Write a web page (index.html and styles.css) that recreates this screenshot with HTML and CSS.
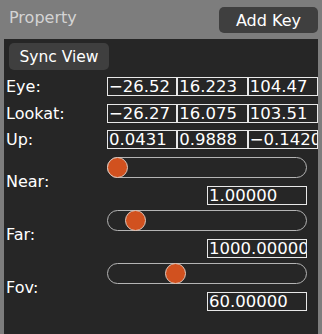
FILE: index.html
```html
<!DOCTYPE html>
<html lang="en">
<head>
    <meta charset="UTF-8">
    <title>Property</title>
    <link rel="stylesheet" href="styles.css">
</head>
<body>
    <div class="header">
        <div class="title">Property</div>
        <div class="btn add-key">Add Key</div>
    </div>

    <div class="panel">
        <div class="btn sync">Sync View</div>

        <div class="vec-rows">
            <div class="label">Eye:</div>
            <div class="vec">
                <div class="field">&minus;26.52</div>
                <div class="field">16.223</div>
                <div class="field">104.47</div>
            </div>

            <div class="label">Lookat:</div>
            <div class="vec">
                <div class="field">&minus;26.27</div>
                <div class="field">16.075</div>
                <div class="field">103.51</div>
            </div>

            <div class="label">Up:</div>
            <div class="vec">
                <div class="field">0.0431</div>
                <div class="field">0.9888</div>
                <div class="field">&minus;0.1420</div>
            </div>
        </div>

        <div class="sliders">
            <div class="label">Near:</div>
            <div class="slider-box">
                <div class="track"><div class="thumb" style="--pos: 0"></div></div>
                <div class="field value">1.00000</div>
            </div>

            <div class="label">Far:</div>
            <div class="slider-box">
                <div class="track"><div class="thumb" style="--pos: 0.1"></div></div>
                <div class="field value">1000.00000</div>
            </div>

            <div class="label">Fov:</div>
            <div class="slider-box">
                <div class="track"><div class="thumb" style="--pos: 0.328"></div></div>
                <div class="field value">60.00000</div>
            </div>
        </div>
    </div>
</body>
</html>
```

FILE: styles.css
```css
body {
    margin: 0;
    padding: 0;
    background: #7d7d7d;
    font-family: 'DejaVu Sans', Verdana, sans-serif;
    color: #fff;
    width: 322px;
    height: 334px;
    overflow: hidden;
    display: flex;
    flex-direction: column;
}

.header {
    height: 39px;
    display: flex;
    align-items: flex-start;
    justify-content: space-between;
    padding: 0 4px 0 9px;
    flex-shrink: 0;
}
.title {
    margin-top: 8px;
    font-size: 16px;
    color: #d4d4d4;
}

.btn {
    background: #3f3f3f;
    border-radius: 5px;
    font-size: 16px;
    color: #fff;
    display: flex;
    align-items: center;
    justify-content: center;
}
.add-key {
    margin-top: 7px;
    width: 99px;
    height: 26px;
}

.panel {
    flex: 1;
    margin: 0 4px;
    background: #262626;
    padding-top: 4px;
}
.sync {
    margin-left: 5px;
    width: 100px;
    height: 27px;
    font-size: 15.5px;
}

.label {
    padding-left: 2px;
    font-size: 16px;
    line-height: 19px;
}

.vec-rows {
    margin-top: 7px;
    display: grid;
    grid-template-columns: 103px 211px;
    grid-auto-rows: 19px;
    row-gap: 7.5px;
    align-items: center;
}
.vec {
    display: grid;
    grid-template-columns: repeat(3, 1fr);
    height: 19px;
}

.field {
    border: 1px solid #e8e8e8;
    height: 19px;
    box-sizing: border-box;
    font-size: 16.5px;
    line-height: 17px;
    padding-left: 1px;
    overflow: hidden;
    white-space: nowrap;
}

.sliders {
    margin-top: 8px;
    display: grid;
    grid-template-columns: 103px 211px;
    row-gap: 5px;
    align-items: center;
}
.slider-box {
    display: flex;
    flex-direction: column;
    align-items: flex-end;
    gap: 8px;
    padding-right: 11px;
}
.track {
    position: relative;
    width: 200px;
    height: 21px;
    box-sizing: border-box;
    border: 1px solid #b4b4b4;
    border-radius: 10.5px;
}
.thumb {
    position: absolute;
    top: -1px;
    left: calc((100% - 20px) * var(--pos));
    width: 21px;
    height: 21px;
    margin-left: -1px;
    box-sizing: border-box;
    border-radius: 50%;
    background: #d1511f;
    border: 1px solid #e0c8bc;
}
.value {
    width: 100px;
}
```
